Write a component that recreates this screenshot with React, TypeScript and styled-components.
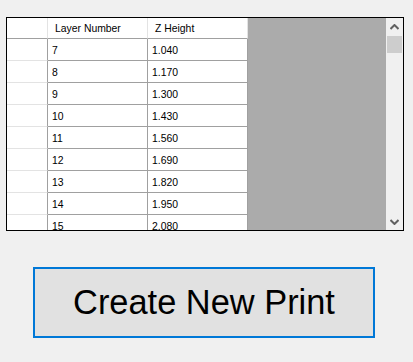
import styled, { createGlobalStyle } from "styled-components";

const GlobalStyle = createGlobalStyle`
  html, body {
    margin: 0;
    padding: 0;
    background: #f0f0f0;
  }
  body {
    font-family: "Liberation Sans", Arial, sans-serif;
    width: 413px;
    height: 362px;
    overflow: hidden;
  }
`;

const Page = styled.div`
  display: flex;
  flex-direction: column;
  align-items: flex-start;
  padding: 17px 0 0 6px;
`;

const GridFrame = styled.div`
  display: flex;
  width: 396px;
  height: 212px;
  border: 1px solid #000;
  background: #ababab;
  overflow: hidden;
`;

const Table = styled.div`
  display: flex;
  flex-direction: column;
  width: 241px;
  flex: none;
  overflow: hidden;
`;

const Row = styled.div<{ $header?: boolean }>`
  display: grid;
  grid-template-columns: 41px 100px 100px;
  height: ${(p) => (p.$header ? "21px" : "22px")};
  flex: none;
`;

const RowHead = styled.div<{ $header?: boolean }>`
  background: #fff;
  border-right: 1px solid ${(p) => (p.$header ? "#e3e3e3" : "#a0a0a0")};
  border-bottom: 1px solid ${(p) => (p.$header ? "#a0a0a0" : "#e3e3e3")};
`;

const HeadCell = styled.div`
  background: #fff;
  border-right: 1px solid #e3e3e3;
  border-bottom: 1px solid #a0a0a0;
  font-size: 10.4px;
  color: #000;
  padding-left: 7px;
  display: flex;
  align-items: center;
  white-space: nowrap;
`;

const Cell = styled.div`
  background: #fff;
  border-right: 1px solid #a0a0a0;
  border-bottom: 1px solid #a0a0a0;
  font-size: 10.4px;
  color: #000;
  padding-left: 4px;
  padding-top: 1px;
  display: flex;
  align-items: center;
`;

const Filler = styled.div`
  flex: 1;
  background: #ababab;
`;

const ScrollBar = styled.div`
  width: 17px;
  flex: none;
  background: #f0f0f0;
  display: flex;
  flex-direction: column;
`;

const ArrowBtn = styled.div`
  height: 17px;
  display: flex;
  align-items: center;
  justify-content: center;
  flex: none;
`;

const Track = styled.div`
  flex: 1;
  padding: 1px 1px 0 1px;
`;

const Thumb = styled.div`
  height: 17px;
  background: #cdcdcd;
`;

const PrintButton = styled.button`
  margin: 36px 0 0 27px;
  width: 342px;
  height: 71px;
  box-sizing: border-box;
  border: 2px solid #0078d7;
  background: #e1e1e1;
  font-family: "Liberation Sans", Arial, sans-serif;
  font-size: 34.4px;
  color: #000;
  padding: 0;
  cursor: pointer;
  display: flex;
  align-items: center;
  justify-content: center;
`;

const layers = [
  [7, "1.040"],
  [8, "1.170"],
  [9, "1.300"],
  [10, "1.430"],
  [11, "1.560"],
  [12, "1.690"],
  [13, "1.820"],
  [14, "1.950"],
  [15, "2.080"],
];

function Chevron({ up }: { up?: boolean }) {
  return (
    <svg width="9" height="6" viewBox="0 0 9 6">
      <path
        d={up ? "M0.5 5 L4.5 1 L8.5 5" : "M0.5 1 L4.5 5 L8.5 1"}
        fill="none"
        stroke="#606060"
        strokeWidth="2"
      />
    </svg>
  );
}

export default function App() {
  return (
    <>
      <GlobalStyle />
      <Page>
        <GridFrame>
          <Table>
            <Row $header>
              <RowHead $header />
              <HeadCell>Layer Number</HeadCell>
              <HeadCell>Z Height</HeadCell>
            </Row>
            {layers.map(([n, z]) => (
              <Row key={n}>
                <RowHead />
                <Cell>{n}</Cell>
                <Cell>{z}</Cell>
              </Row>
            ))}
          </Table>
          <Filler />
          <ScrollBar>
            <ArrowBtn>
              <Chevron up />
            </ArrowBtn>
            <Track>
              <Thumb />
            </Track>
            <ArrowBtn>
              <Chevron />
            </ArrowBtn>
          </ScrollBar>
        </GridFrame>
        <PrintButton>Create New Print</PrintButton>
      </Page>
    </>
  );
}
